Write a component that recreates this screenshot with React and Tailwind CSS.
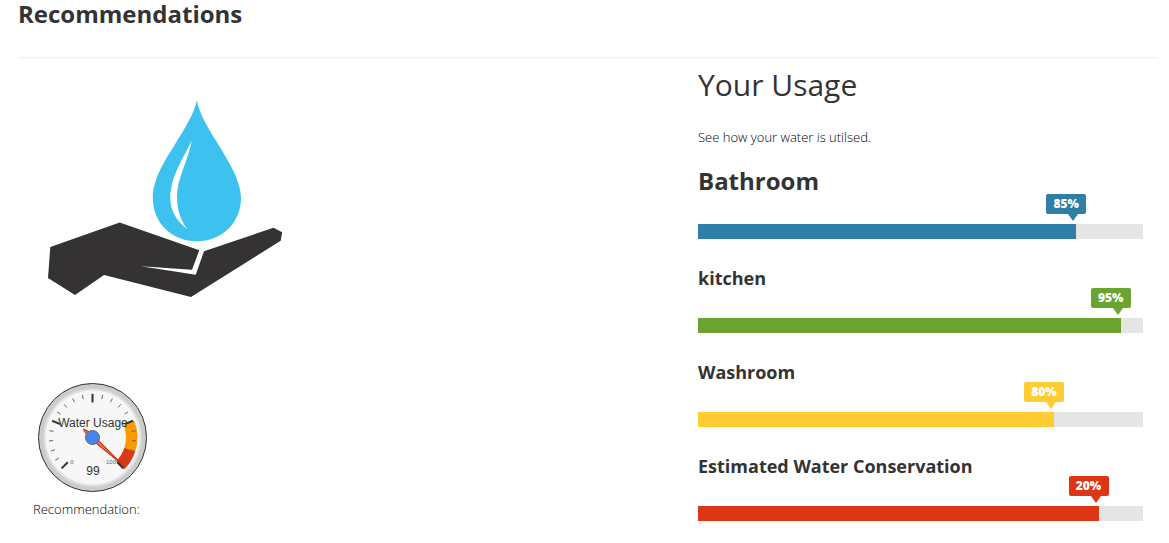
const rooms = [
  { name: "Bathroom", label: "85%", value: 85, tone: "bg-[#2e7ea5]", arrow: "border-t-[#2e7ea5]", large: true },
  { name: "kitchen", label: "95%", value: 95, tone: "bg-[#6aa42f]", arrow: "border-t-[#6aa42f]" },
  { name: "Washroom", label: "80%", value: 80, tone: "bg-[#ffcc33]", arrow: "border-t-[#ffcc33]" },
  { name: "Estimated Water Conservation", label: "20%", value: 90, tone: "bg-[#dc3616]", arrow: "border-t-[#dc3616]" },
];

function UsageBar({ room }) {
  return (
    <section className="flex h-[94px] flex-col justify-between">
      <h3 className={room.large ? "text-2xl leading-8 font-bold" : "pt-[7px] text-lg leading-6 font-bold"}>
        {room.name}
      </h3>
      <div className="mb-5 h-[15px] bg-[#e5e5e5]">
        <div className={`relative h-full ${room.tone}`} style={{ width: `${room.value}%` }}>
          <span className={`absolute -top-[30px] -right-[10px] h-5 w-10 rounded-xs text-center text-xs leading-5 font-extrabold text-white ${room.tone}`}>
            {room.label}
            <span className={`absolute top-5 right-2 border-x-5 border-t-7 border-x-transparent ${room.arrow}`} />
          </span>
        </div>
      </div>
    </section>
  );
}

function WaterInHand() {
  return (
    <svg viewBox="33 72 250 226" className="h-[226px] w-[250px]" role="img" aria-label="Hand holding a drop of water">
      <path
        fill="#3dc2f0"
        d="M196.8 100.5C194 114 185 128 175.7 143.3C166 159 152.8 178 152.8 198C152.8 223 172 241.3 196.8 241.3C221.5 241.3 241 223 241 198C241 180 227 159 217.5 143.3C208 128 199.500 114 196.800 100.500Z"
      />
      <path fill="#fff" d="M191.7 140.500C183 159 170.300 177 170.300 198C170.300 211 177 221 187.200 229.200C180.500 220 177 210 177 196C177 179 189 158 191.700 140.500Z" />
      <path
        fill="#353233"
        d="M50.300 247L119.700 222.400L199.300 250.300L192 269.700L141 266.200L195.700 274.700L204 251.300L273.500 227.700L282.200 232.300L280.700 240.700L191 297L104 275L75 295L48 278Z"
      />
    </svg>
  );
}

const point = (value, radius) => {
  const a = ((135 + value * 2.7) * Math.PI) / 180;
  return [60 + radius * Math.cos(a), 60 + radius * Math.sin(a)];
};

const band = (from, to) => {
  const [a, b, c, d] = [point(from, 45), point(to, 45), point(to, 33.5), point(from, 33.5)];
  return `M${a}A45 45 0 0 1 ${b}L${c}A33.5 33.5 0 0 0 ${d}Z`;
};

function Gauge() {
  const ticks = Array.from({ length: 21 }, (_, i) => {
    const major = i % 5 === 0;
    const [x1, y1] = point(i * 5, major ? 35 : 39.5);
    const [x2, y2] = point(i * 5, 43.7);
    return <line key={i} x1={x1} y1={y1} x2={x2} y2={y2} stroke={major ? "#333" : "#666"} strokeWidth={major ? 2 : 1} />;
  });
  return (
    <svg viewBox="0.5 0.5 120 120" className="h-[120px] w-[120px] font-['Liberation_Sans',sans-serif]" role="img" aria-label="Water Usage gauge at 99">
      <circle cx="60" cy="60" r="54" fill="#ccc" stroke="#333" />
      <circle cx="60" cy="60" r="48" fill="#f7f7f7" stroke="#e0e0e0" strokeWidth="2" />
      <path d={band(75, 90)} fill="#ff9900" />
      <path d={band(90, 100)} fill="#dc3912" />
      {ticks}
      <g fill="#333" textAnchor="middle">
        <text x="60.5" y="49.500" fontSize="12">Water Usage</text>
        <text x="39.500" y="86" fontSize="6" fill="#666">0</text>
        <text x="78.500" y="86" fontSize="6" fill="#666">100</text>
        <text x="60.500" y="97.500" fontSize="12">99</text>
      </g>
      <path d="M-12 0Q-12 -1.500 0 -2.200L40 0L0 2.200Q-12 1.500 -12 0Z" transform="translate(60 60) rotate(42.300)" fill="#dc3912" fillOpacity="0.700" stroke="#c63310" strokeWidth="1" />
      <circle cx="60" cy="60" r="7" fill="#4684ee" stroke="#666" />
    </svg>
  );
}

export default function App() {
  return (
    <main className="bg-white pr-[11px] pl-[18px] font-['Open_Sans',sans-serif] text-[#333]">
      <header className="border-b border-[#eee] pb-[29px]">
        <h1 className="text-2xl leading-7 font-bold">Recommendations</h1>
      </header>
      <div className="grid grid-cols-12">
        <section className="col-span-7 flex flex-col items-start px-[15px] pt-[14px]">
          <WaterInHand />
          <div className="mt-20">
            <Gauge />
          </div>
          <p className="mt-px text-[13px] leading-5 font-light text-black">Recommendation:</p>
        </section>
        <section className="col-span-5 px-[15px] pt-[7px]">
          <h2 className="text-3xl leading-10 font-normal">Your Usage</h2>
          <p className="mt-[22px] mb-[18px] text-[13px] leading-5 font-light text-black">See how your water is utilsed.</p>
          {rooms.map((room) => (
            <UsageBar key={room.name} room={room} />
          ))}
        </section>
      </div>
    </main>
  );
}
